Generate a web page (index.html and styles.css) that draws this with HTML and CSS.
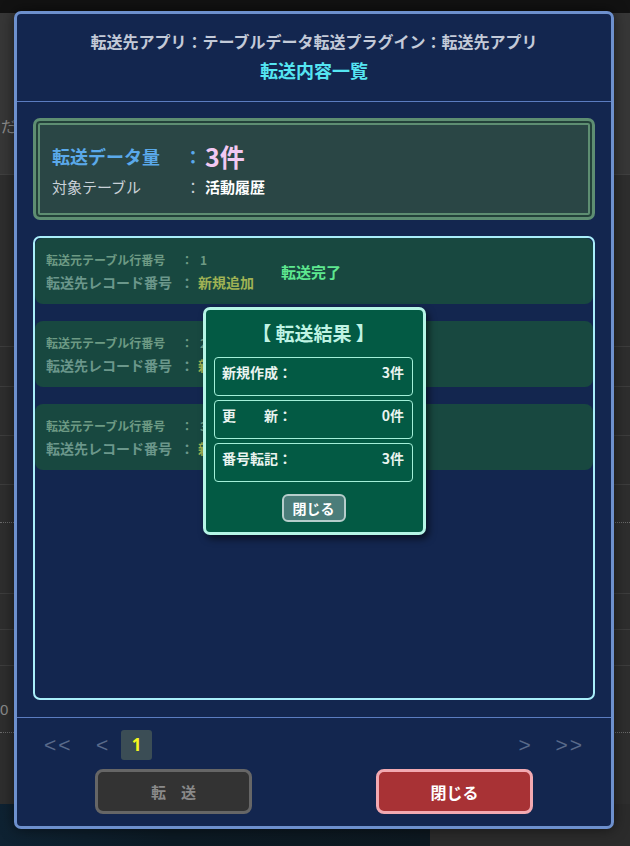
FILE: index.html
```html
<!DOCTYPE html>
<html lang="ja">
<head>
<meta charset="utf-8">
<title>転送内容一覧</title>
<link rel="stylesheet" href="styles.css">
</head>
<body>
<div class="page">
  <div class="page-top"></div>
  <div class="page-head"><span class="page-cut">ださい</span></div>
  <div class="page-body">
    <div class="prow h172"></div>
    <div class="prow h40"></div>
    <div class="prow h49"></div>
    <div class="prow h49"></div>
    <div class="prow h38 dotted"></div>
    <div class="prow h71"></div>
    <div class="prow h36"></div>
    <div class="prow h36"></div>
    <div class="prow h67 dotted"><span class="page-zero">0</span></div>
    <div class="prow h71 none"></div>
  </div>
  <div class="page-foot">
    <div class="foot-navy"></div>
    <div class="foot-gray"></div>
  </div>
</div>

<div class="modal">
  <div class="modal-header">
    <div class="modal-title">転送先アプリ：テーブルデータ転送プラグイン：転送先アプリ</div>
    <div class="modal-subtitle">転送内容一覧</div>
  </div>
  <div class="modal-body">
    <div class="summary">
      <div class="sum-line sum-main">
        <span class="sum-label">転送データ量</span><span class="sum-colon">：</span><span class="sum-count">3件</span>
      </div>
      <div class="sum-line sum-sub">
        <span class="sum-label">対象テーブル</span><span class="sum-colon">：</span><span class="sum-table">活動履歴</span>
      </div>
    </div>
    <div class="list">
      <div class="rec">
        <div class="rec-info">
          <div class="rec-l1"><span class="rec-label">転送元テーブル行番号</span><span class="rec-colon">：</span><span class="rec-no">1</span></div>
          <div class="rec-l2"><span class="rec-label">転送先レコード番号</span><span class="rec-colon">：</span><span class="rec-new">新規追加</span></div>
        </div>
        <div class="rec-status">転送完了</div>
      </div>
      <div class="rec">
        <div class="rec-info">
          <div class="rec-l1"><span class="rec-label">転送元テーブル行番号</span><span class="rec-colon">：</span><span class="rec-no">2</span></div>
          <div class="rec-l2"><span class="rec-label">転送先レコード番号</span><span class="rec-colon">：</span><span class="rec-new">新規追加</span></div>
        </div>
        <div class="rec-status">転送完了</div>
      </div>
      <div class="rec">
        <div class="rec-info">
          <div class="rec-l1"><span class="rec-label">転送元テーブル行番号</span><span class="rec-colon">：</span><span class="rec-no">3</span></div>
          <div class="rec-l2"><span class="rec-label">転送先レコード番号</span><span class="rec-colon">：</span><span class="rec-new">新規追加</span></div>
        </div>
        <div class="rec-status">転送完了</div>
      </div>
    </div>
  </div>
  <div class="modal-footer">
    <div class="pager">
      <span class="pg pg-first">&lt;&lt;</span>
      <span class="pg pg-prev">&lt;</span>
      <span class="pg-cur">1</span>
      <span class="pg-space"></span>
      <span class="pg pg-next">&gt;</span>
      <span class="pg pg-last">&gt;&gt;</span>
    </div>
    <div class="actions">
      <button class="btn btn-send">転　送</button>
      <button class="btn btn-close">閉じる</button>
    </div>
  </div>
</div>

<div class="result">
  <div class="result-title">【 転送結果 】</div>
  <div class="result-list">
    <div class="result-item"><span>新規作成：</span><span>3件</span></div>
    <div class="result-item"><span>更　　新：</span><span>0件</span></div>
    <div class="result-item"><span>番号転記：</span><span>3件</span></div>
  </div>
  <div class="result-actions"><button class="result-btn">閉じる</button></div>
</div>
</body>
</html>
```

FILE: styles.css
```css
* { box-sizing: border-box; }
html, body {
  margin: 0;
  padding: 0;
  width: 630px;
  height: 846px;
  overflow: hidden;
  background: #2e2e2e;
  font-family: "Noto Sans CJK JP", "Noto Sans", sans-serif;
}

/* dimmed page behind the dialog */
.page { width: 630px; height: 846px; display: flex; flex-direction: column; }
.page-top { height: 13px; background: #121212; }
.page-head {
  height: 162px;
  background: #373737;
  border-bottom: 1px solid #404040;
  overflow: hidden;
  padding-top: 103px;
}
.page-cut {
  display: block;
  padding-left: 1px;
  color: #8c8c8c;
  font-size: 15px;
  line-height: 20px;
  white-space: nowrap;
}
.page-body { background: #2e2e2e; }
.prow { border-bottom: 1px solid #3d3d3d; }
.prow.dotted { border-bottom: 1px dotted #6a6a6a; }
.prow.none { border-bottom: none; }
.h172 { height: 172px; }
.h40 { height: 40px; }
.h49 { height: 49px; }
.h38 { height: 38px; }
.h71 { height: 71px; }
.h36 { height: 36px; }
.h67 { height: 67px; }
.page-zero {
  display: block;
  padding-top: 34px;
  color: #8a8a8a;
  font-family: "Liberation Sans", sans-serif;
  font-size: 15px;
  line-height: 20px;
}
.page-foot { flex: 1; display: flex; }
.foot-navy { width: 430px; background: linear-gradient(90deg, #0e2232, #0c1a24 40%, #0d1820); }
.foot-gray { flex: 1; background: #2b2b2b; }

/* dialog */
.modal {
  position: absolute;
  left: 14px;
  top: 11px;
  width: 600px;
  background: #13264f;
  border: 3px solid #6d90cd;
  border-radius: 7px;
  box-shadow: 0 0 14px rgba(0, 0, 0, 0.55);
}
.modal-header {
  padding: 13px 0 16px;
  text-align: center;
  border-bottom: 1px solid #5b7cc0;
  font-weight: 700;
  font-size: 16px;
  line-height: 29px;
}
.modal-title { color: #c3cad8; }
.modal-subtitle { color: #55e5f2; font-size: 18px; }

.modal-body { padding: 16px 16px 17px; border-bottom: 1px solid #5b7cc0; }

.summary {
  height: 102px;
  background: #2a4645;
  border: 3px solid #5e8e72;
  border-radius: 7px;
  box-shadow: inset 0 0 0 2px #23413a, inset 0 0 0 4px #5e8e72;
  padding: 20px 16px 0;
}
.sum-line { display: flex; align-items: center; height: 30px; }
.sum-label { width: 132px; }
.sum-colon { width: 18px; text-align: center; }
.sum-main { color: #5aa9ea; font-weight: 700; font-size: 18px; }
.sum-count { color: #f2c8f2; font-size: 25px; margin-left: 3px; }
.sum-sub { color: #c9d1d8; font-size: 15px; font-weight: 400; }
.sum-table { color: #ffffff; font-weight: 700; margin-left: 3px; }

.list {
  margin-top: 16px;
  height: 464px;
  border: 2px solid #a9eefa;
  border-radius: 7px;
  display: flex;
  flex-direction: column;
  gap: 17px;
}
.rec {
  height: 66px;
  background: #184840;
  border-radius: 8px;
  display: flex;
  align-items: center;
  padding-left: 11px;
  font-weight: 700;
}
.rec-info { width: 235px; padding-top: 2px; }
.rec-l1, .rec-l2 { display: flex; align-items: center; color: #6d9a84; white-space: nowrap; }
.rec-l1 { font-size: 12px; height: 20px; }
.rec-l2 { font-size: 14px; height: 26px; color: #6b978b; }
.rec-label { width: 134px; }
.rec-colon { width: 14px; text-align: center; }
.rec-no { margin-left: 6px; }
.rec-new { margin-left: 4px; color: #9fb254; }
.rec-status { color: #5ee78f; font-size: 15px; }

.modal-footer { padding: 12px 0 12px; }
.pager {
  display: flex;
  align-items: center;
  height: 30px;
  padding-left: 27px;
  padding-right: 27px;
  color: #596a8a;
  font-family: "Liberation Sans", sans-serif;
  font-size: 21px;
}
.pg { line-height: 30px; }
.pg-first { width: 52px; letter-spacing: 2px; }
.pg-prev { width: 25px; }
.pg-cur {
  width: 31px;
  height: 30px;
  background: #3b4d55;
  border-radius: 3px;
  color: #f6f61e;
  font-family: "Noto Sans", sans-serif;
  font-weight: 700;
  font-size: 17px;
  line-height: 30px;
  text-align: center;
}
.pg-space { flex: 1; }
.pg-next { width: 37px; }
.pg-last { letter-spacing: 2px; }

.actions { display: flex; justify-content: center; gap: 124px; margin-top: 9px; }
.btn {
  width: 157px;
  height: 45px;
  border-radius: 8px;
  border: 3px solid;
  font-family: "Noto Sans CJK JP", sans-serif;
  font-weight: 700;
  font-size: 16px;
  padding: 0;
}
.btn-send { background: #333333; border-color: #666666; color: #8a8a8a; font-size: 15px; }
.btn-close { background: #a83235; border-color: #f2a9b1; color: #ffffff; }

/* result popup over the list */
.result {
  position: absolute;
  left: 203px;
  top: 307px;
  width: 223px;
  height: 228px;
  background: #035a44;
  border: 3px solid #b5f6e6;
  border-radius: 7px;
  box-shadow: 3px 4px 7px rgba(0, 0, 0, 0.55);
  padding: 10px 10px 10px 8px;
  font-weight: 700;
  display: flex;
  flex-direction: column;
}
.result-title {
  height: 26px;
  text-align: center;
  color: #bff3e3;
  font-size: 19px;
  line-height: 26px;
  white-space: nowrap;
}
.result-list { display: flex; flex-direction: column; gap: 4px; margin-top: 11px; }
.result-item {
  height: 39px;
  border: 1px solid #a3f0d9;
  border-radius: 4px;
  padding: 5px 8px 0 7px;
  display: flex;
  justify-content: space-between;
  color: #eaf4f0;
  font-size: 14px;
  line-height: 18px;
}
.result-actions { display: flex; justify-content: center; margin-top: 12px; height: 28px; }
.result-btn {
  width: 64px;
  height: 28px;
  padding: 0;
  background: #4b7d7a;
  border: 2px solid #b6cdcb;
  border-radius: 6px;
  color: #ffffff;
  font-family: "Noto Sans CJK JP", sans-serif;
  font-weight: 700;
  font-size: 14px;
  line-height: 22px;
}
```
